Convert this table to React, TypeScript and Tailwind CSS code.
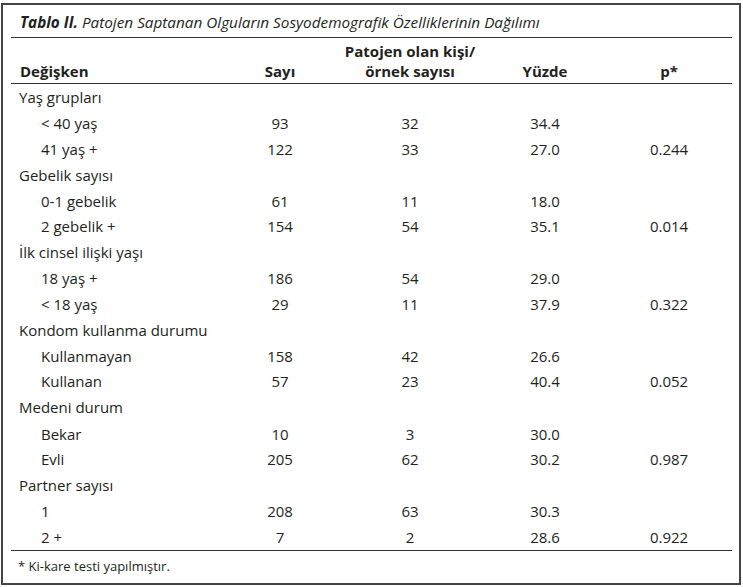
const groups = [
  {
    title: 'Yaş grupları',
    p: '0.244',
    items: [
      { label: '< 40 yaş', sayi: '93', patojen: '32', yuzde: '34.4' },
      { label: '41 yaş +', sayi: '122', patojen: '33', yuzde: '27.0' },
    ],
  },
  {
    title: 'Gebelik sayısı',
    p: '0.014',
    items: [
      { label: '0-1 gebelik', sayi: '61', patojen: '11', yuzde: '18.0' },
      { label: '2 gebelik +', sayi: '154', patojen: '54', yuzde: '35.1' },
    ],
  },
  {
    title: 'İlk cinsel ilişki yaşı',
    p: '0.322',
    items: [
      { label: '18 yaş +', sayi: '186', patojen: '54', yuzde: '29.0' },
      { label: '< 18 yaş', sayi: '29', patojen: '11', yuzde: '37.9' },
    ],
  },
  {
    title: 'Kondom kullanma durumu',
    p: '0.052',
    items: [
      { label: 'Kullanmayan', sayi: '158', patojen: '42', yuzde: '26.6' },
      { label: 'Kullanan', sayi: '57', patojen: '23', yuzde: '40.4' },
    ],
  },
  {
    title: 'Medeni durum',
    p: '0.987',
    items: [
      { label: 'Bekar', sayi: '10', patojen: '3', yuzde: '30.0' },
      { label: 'Evli', sayi: '205', patojen: '62', yuzde: '30.2' },
    ],
  },
  {
    title: 'Partner sayısı',
    p: '0.922',
    items: [
      { label: '1', sayi: '208', patojen: '63', yuzde: '30.3' },
      { label: '2 +', sayi: '7', patojen: '2', yuzde: '28.6' },
    ],
  },
];

export default function App() {
  return (
    <div className="w-[743px] h-[587px] bg-white pt-[3px] pl-[1px] text-[#231f20] font-['Open_Sans',sans-serif]">
      <div className="w-[740px] h-[582px] border-2 border-[#444] pl-[8px] pr-[7px]">
        {/* Title */}
        <div className="h-[33px] border-b border-[#333] pl-[9px] pt-[8px] text-[15.3px] leading-[18px] italic">
          <span className="font-bold">Tablo II.</span> Patojen Saptanan Olguların Sosyodemografik Özelliklerinin Dağılımı
        </div>

        {/* Header */}
        <div className="flex items-end h-[46px] border-b border-[#333] pb-[2px] text-[15px] leading-[20px] font-bold">
          <div className="w-[209px] pl-[9px]">Değişken</div>
          <div className="w-[120px] text-center">Sayı</div>
          <div className="w-[140px] text-center">
            Patojen olan kişi/
            <br />
            örnek sayısı
          </div>
          <div className="w-[130px] text-center">Yüzde</div>
          <div className="w-[118px] text-center">p*</div>
        </div>

        {/* Body */}
        <div className="border-b border-[#333] text-[15px] leading-[20px]">
          {groups.map((g) => (
            <div key={g.title}>
              <div className="h-[27px] flex items-end pb-[4px] pl-[8px]">{g.title}</div>
              {g.items.map((it, i) => (
                <div key={it.label} className="flex h-[25.3px] items-end pb-[3px]">
                  <div className="w-[209px] pl-[30px]">{it.label}</div>
                  <div className="w-[120px] text-center">{it.sayi}</div>
                  <div className="w-[140px] text-center">{it.patojen}</div>
                  <div className="w-[130px] text-center">{it.yuzde}</div>
                  <div className="w-[118px] text-center">{i === g.items.length - 1 ? g.p : ''}</div>
                </div>
              ))}
            </div>
          ))}
        </div>

        {/* Footnote */}
        <div className="pl-[7px] pt-[6px] text-[13px] leading-[18px]">* Ki-kare testi yapılmıştır.</div>
      </div>
    </div>
  );
}
